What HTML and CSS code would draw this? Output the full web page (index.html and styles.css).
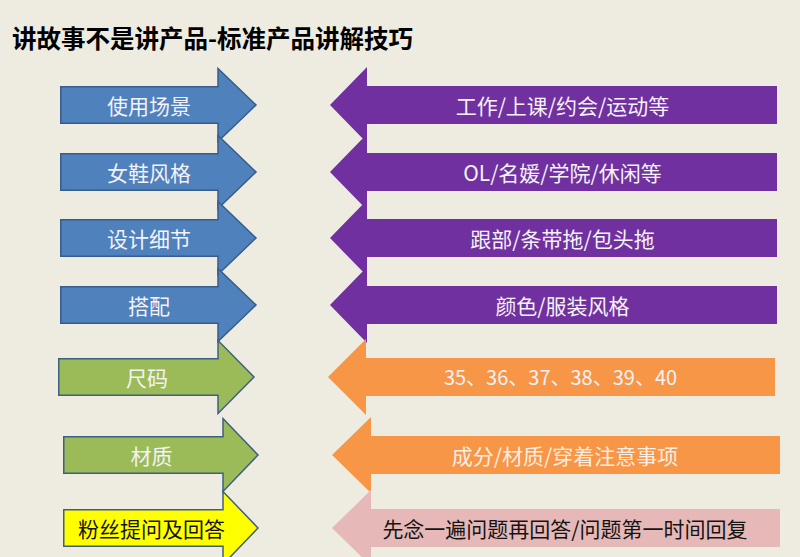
FILE: index.html
```html
<!DOCTYPE html>
<html lang="zh-CN">
<head>
<meta charset="utf-8">
<title>讲故事不是讲产品-标准产品讲解技巧</title>
<link rel="stylesheet" href="styles.css">
</head>
<body>
<div class="page">
  <h1 class="title">讲故事不是讲产品-标准产品讲解技巧</h1>
  <div class="rows">
    <div class="row r1">
      <div class="arrow-l w197">
        <svg class="shape" width="197" height="76" viewBox="0 0 197 76"><path class="s-blue" d="M0.75 19.75H158V1.5L196 38L158 74.5V56.25H0.75Z"/></svg>
        <span class="label label-l light">使用场景</span>
      </div>
      <div class="arrow-r w447">
        <svg class="shape" width="447" height="76" viewBox="0 0 447 76"><path class="f-purple" d="M0 38L37 0V19H447V57H37V76Z"/></svg>
        <span class="label label-r light">工作/上课/约会/运动等</span>
      </div>
    </div>
    <div class="row r2">
      <div class="arrow-l w197">
        <svg class="shape" width="197" height="76" viewBox="0 0 197 76"><path class="s-blue" d="M0.75 19.75H158V1.5L196 38L158 74.5V56.25H0.75Z"/></svg>
        <span class="label label-l light">女鞋风格</span>
      </div>
      <div class="arrow-r w447">
        <svg class="shape" width="447" height="76" viewBox="0 0 447 76"><path class="f-purple" d="M0 38L37 0V19H447V57H37V76Z"/></svg>
        <span class="label label-r light">OL/名媛/学院/休闲等</span>
      </div>
    </div>
    <div class="row r3">
      <div class="arrow-l w197">
        <svg class="shape" width="197" height="76" viewBox="0 0 197 76"><path class="s-blue" d="M0.75 19.75H158V1.5L196 38L158 74.5V56.25H0.75Z"/></svg>
        <span class="label label-l light">设计细节</span>
      </div>
      <div class="arrow-r w447">
        <svg class="shape" width="447" height="76" viewBox="0 0 447 76"><path class="f-purple" d="M0 38L37 0V19H447V57H37V76Z"/></svg>
        <span class="label label-r light">跟部/条带拖/包头拖</span>
      </div>
    </div>
    <div class="row r4">
      <div class="arrow-l w197">
        <svg class="shape" width="197" height="76" viewBox="0 0 197 76"><path class="s-blue" d="M0.75 19.75H158V1.5L196 38L158 74.5V56.25H0.75Z"/></svg>
        <span class="label label-l light">搭配</span>
      </div>
      <div class="arrow-r w447">
        <svg class="shape" width="447" height="76" viewBox="0 0 447 76"><path class="f-purple" d="M0 38L37 0V19H447V57H37V76Z"/></svg>
        <span class="label label-r light">颜色/服装风格</span>
      </div>
    </div>
    <div class="row r5">
      <div class="arrow-l w197">
        <svg class="shape" width="197" height="76" viewBox="0 0 197 76"><path class="s-green" d="M0.75 19.75H160V1.5L196 38L160 74.5V56.25H0.75Z"/></svg>
        <span class="label label-l light">尺码</span>
      </div>
      <div class="arrow-r w447">
        <svg class="shape" width="447" height="76" viewBox="0 0 447 76"><path class="f-orange" d="M0 38L38 0V19H447V57H38V76Z"/></svg>
        <span class="label label-r light nums">35、36、37、38、39、40</span>
      </div>
    </div>
    <div class="row r6">
      <div class="arrow-l w196">
        <svg class="shape" width="196" height="76" viewBox="0 0 196 76"><path class="s-green" d="M0.75 19.75H160V1.5L195 38L160 74.5V56.25H0.75Z"/></svg>
        <span class="label label-l light">材质</span>
      </div>
      <div class="arrow-r w448">
        <svg class="shape" width="448" height="76" viewBox="0 0 448 76"><path class="f-orange" d="M0 38L39 0V19H448V57H39V76Z"/></svg>
        <span class="label label-r cream">成分/材质/穿着注意事项</span>
      </div>
    </div>
    <div class="row r7">
      <div class="arrow-l w196">
        <svg class="shape" width="196" height="76" viewBox="0 0 196 76"><path class="s-yellow" d="M0.75 19.75H160V1.5L195 38L160 74.5V56.25H0.75Z"/></svg>
        <span class="label label-l dark">粉丝提问及回答</span>
      </div>
      <div class="arrow-r w448">
        <svg class="shape" width="448" height="76" viewBox="0 0 448 76"><path class="f-pink" d="M0 38L39 0V19H448V57H39V76Z"/></svg>
        <span class="label label-r dark">先念一遍问题再回答/问题第一时间回复</span>
      </div>
    </div>
  </div>
</div>
</body>
</html>
```
FILE: styles.css
```css
html, body {
  margin: 0;
  padding: 0;
  background: #eeece1;
}
body {
  width: 800px;
  height: 557px;
  overflow: hidden;
  font-family: "Noto Sans CJK SC", "Noto Sans", sans-serif;
}
.page {
  padding-top: 23px;
}
.title {
  margin: 0 0 0 12px;
  font-size: 24.5px;
  line-height: 30px;
  font-weight: 700;
  color: #000;
  letter-spacing: 0;
}
.rows {
  margin-top: 33px;
  display: flex;
  flex-direction: column;
}
.row {
  display: flex;
  height: 38px;
}
.r1 { padding-left: 60px; }
.r2 { padding-left: 60px; margin-top: 29px; }
.r3 { padding-left: 60px; margin-top: 28px; }
.r4 { padding-left: 60px; margin-top: 29px; }
.r5 { padding-left: 58px; margin-top: 34px; }
.r6 { padding-left: 63px; margin-top: 40px; }
.r7 { padding-left: 63px; margin-top: 35px; }

.arrow-l, .arrow-r {
  position: relative;
  height: 38px;
  flex: none;
}
.arrow-r { margin-left: 73px; }
.w196 { width: 196px; }
.w197 { width: 197px; }
.w447 { width: 447px; }
.w448 { width: 448px; }

.shape {
  position: absolute;
  left: 0;
  top: -19px;
  overflow: visible;
}
.s-blue { fill: #4f81bd; stroke: #385d8a; stroke-width: 1.5; stroke-linejoin: miter; }
.s-green { fill: #9bbb59; stroke: #3f5f82; stroke-width: 1.5; }
.s-yellow { fill: #ffff00; stroke: #3f5f82; stroke-width: 1.5; }
.f-purple { fill: #7030a0; }
.f-orange { fill: #f79646; }
.f-pink { fill: #e6b9b8; }

.label {
  position: relative;
  z-index: 1;
  display: block;
  box-sizing: border-box;
  width: 100%;
  height: 38px;
  line-height: 38px;
  font-size: 21px;
  text-align: center;
  white-space: nowrap;
}
.label-l { padding-right: 19px; }
.label-r { padding-left: 18px; }
.light { color: #f4f2f6; }
.cream { color: #fdeee2; }
.dark { color: #141414; }
.nums { font-size: 20px; }
```
